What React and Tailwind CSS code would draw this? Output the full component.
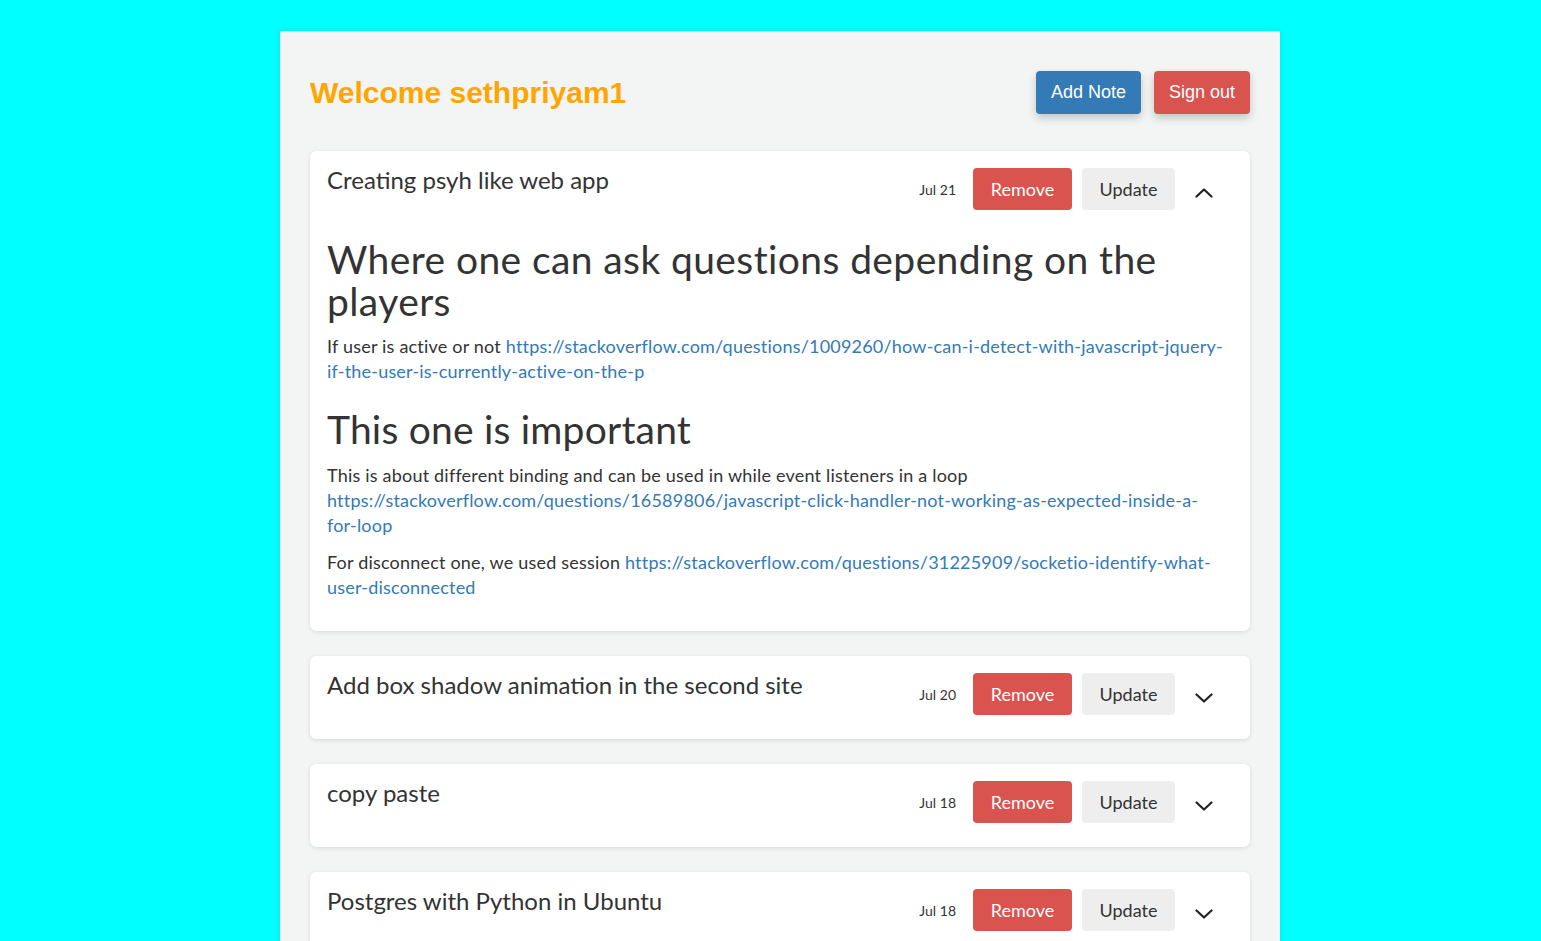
const notes = [
  { title: "Creating psyh like web app", date: "Jul 21", open: true },
  { title: "Add box shadow animation in the second site", date: "Jul 20" },
  { title: "copy paste", date: "Jul 18" },
  { title: "Postgres with Python in Ubuntu", date: "Jul 18" },
];

const linkCls = "text-[#337ab7] wrap-break-word";

const Chevron = ({ up }) => (
  <svg width="18" height="10" viewBox="0 0 18 10" fill="none" stroke="#222" strokeWidth="2.2" strokeLinecap="round" strokeLinejoin="round">
    {up ? <polyline points="1.5,8.5 9,1.5 16.5,8.5" /> : <polyline points="1.5,1.5 9,8.5 16.5,1.5" />}
  </svg>
);

const NoteBody = () => (
  <div className="pt-[28px] text-[#333]">
    <h1 className="text-[39px] leading-[42px] tracking-[0.4px]">
      Where one can ask questions depending on the players
    </h1>
    <p className="mt-[12px] text-[18px] leading-[25px] tracking-[0.2px]">
      If user is active or not{" "}
      <a className={linkCls} href="#">
        https://stackoverflow.com/questions/1009260/how-can-i-detect-with-javascript-jquery-if-the-user-is-currently-active-on-the-p
      </a>
    </p>
    <h1 className="mt-[24px] text-[39px] leading-[42px] tracking-[0.2px]">This one is important</h1>
    <p className="mt-[13px] text-[18px] leading-[25px] tracking-[0.2px] pr-4">
      This is about different binding and can be used in while event listeners in a loop{" "}
      <a className={linkCls} href="#">
        https://stackoverflow.com/questions/16589806/javascript-click-handler-not-working-as-expected-inside-a-for-loop
      </a>
    </p>
    <p className="mt-[12px] text-[18px] leading-[25px] tracking-[0.2px] pr-4">
      For disconnect one, we used session{" "}
      <a className={linkCls} href="#">
        https://stackoverflow.com/questions/31225909/socketio-identify-what-user-disconnected
      </a>
    </p>
  </div>
);

const NoteCard = ({ note }) => (
  <div
    className={`bg-white rounded-md shadow-[0_1px_4px_rgba(0,0,0,0.12)] px-[17px] pt-[17px] ${
      note.open ? "pb-[31px]" : "pb-[24px]"
    }`}
  >
    <div className="flex items-start">
      <div className="flex-1 text-[24px] leading-[24px] text-[#333]">{note.title}</div>
      <div className="flex items-center">
        <span className="text-[14px] text-[#333] mr-[17px]">{note.date}</span>
        <button className="h-[42px] w-[99px] rounded bg-[#d9534f] text-white text-[18px]">Remove</button>
        <button className="ml-[10px] h-[42px] w-[93px] rounded bg-[#eeeeee] text-[#333] text-[18px]">Update</button>
        <span className="w-[58px] flex justify-center pt-[7px]">
          <Chevron up={note.open} />
        </span>
      </div>
    </div>
    {note.open && <NoteBody />}
  </div>
);

export default function App() {
  return (
    <div
      className="min-h-screen bg-[#00ffff] pt-[31px]"
      style={{ fontFamily: "Lato, 'Open Sans', sans-serif" }}
    >
      <div className="ml-[280px] w-[1000px] bg-[#f3f4f4] shadow-[0_0_6px_rgba(0,0,0,0.1)] px-[30px] pt-[39px] pb-10">
        <div className="flex items-center justify-between">
          <h2
            className="text-[30px] font-bold text-[#ffa500]"
            style={{ fontFamily: "'Liberation Sans', Arial, sans-serif" }}
          >
            Welcome sethpriyam1
          </h2>
          <div className="flex gap-[13px]" style={{ fontFamily: "'Liberation Sans', Arial, sans-serif" }}>
            <button className="h-[43px] px-[15px] rounded bg-[#337ab7] text-white text-[18px] shadow-[0_4px_8px_rgba(0,0,0,0.2)]">
              Add Note
            </button>
            <button className="h-[43px] px-[15px] rounded bg-[#d9534f] text-white text-[18px] shadow-[0_4px_8px_rgba(0,0,0,0.2)]">
              Sign out
            </button>
          </div>
        </div>
        <div className="mt-[36px] flex flex-col gap-[25px]">
          {notes.map((n) => (
            <NoteCard key={n.title} note={n} />
          ))}
        </div>
      </div>
    </div>
  );
}
